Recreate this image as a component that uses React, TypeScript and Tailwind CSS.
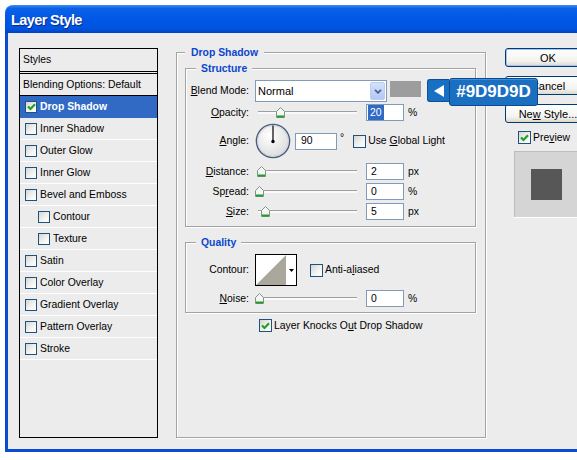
import React from 'react';

// Layer Style dialog — Photoshop look on an XP window frame

const ui = "font-['Liberation_Sans',Arial,sans-serif] text-[10.4px] leading-[14px] text-black";

function CheckBox({ checked = false, small = false }: { checked?: boolean; small?: boolean }) {
  return (
    <span
      className={`flex shrink-0 items-center justify-center border border-[#1c5180] bg-[linear-gradient(135deg,#d6d6d0,#f4f4f1_60%,#ffffff)] ${
        small ? 'h-[12px] w-[12px]' : 'h-[13px] w-[13px]'
      }`}
    >
      {checked && (
        <svg width="9" height="8" viewBox="0 0 9 8">
          <path d="M1 3.4 L3.5 6 L8 1.2" stroke="#21a121" strokeWidth="2.2" fill="none" />
        </svg>
      )}
    </span>
  );
}

const styleRows: { name: string; nested?: boolean }[] = [
  { name: 'Inner Shadow' },
  { name: 'Outer Glow' },
  { name: 'Inner Glow' },
  { name: 'Bevel and Emboss' },
  { name: 'Contour', nested: true },
  { name: 'Texture', nested: true },
  { name: 'Satin' },
  { name: 'Color Overlay' },
  { name: 'Gradient Overlay' },
  { name: 'Pattern Overlay' },
  { name: 'Stroke' },
];

function StylesPanel() {
  return (
    <div className="flex h-[390px] w-[139px] shrink-0 flex-col border border-black">
      <div className="flex h-[23px] items-center border-b border-black pl-[3px]">Styles</div>
      <div className="mt-[1px] flex h-[23px] items-center border-y border-black pl-[3px]">
        Blending Options: Default
      </div>
      <div className="flex h-[22px] items-center gap-[3px] bg-[#316ac5] pl-[5px] font-bold text-white">
        <CheckBox checked small />
        Drop Shadow
      </div>
      {styleRows.map((r) => (
        <div
          key={r.name}
          className={`flex h-[22px] items-center gap-[3px] border-b border-white ${r.nested ? 'pl-[18px]' : 'pl-[5px]'}`}
        >
          <CheckBox small />
          {r.name}
        </div>
      ))}
    </div>
  );
}

function Label({ children }: { children: React.ReactNode }) {
  return <div className="w-[63px] shrink-0 text-right">{children}</div>;
}

function Slider({ thumb }: { thumb: string }) {
  return (
    <div className="relative ml-[9px] flex h-[17px] w-[99px] items-center">
      <div className="h-[3px] w-full border-t border-[#9f9f9f] bg-[#fafafa]" />
      <svg className={`absolute top-[3px] ${thumb}`} width="9" height="11" viewBox="0 0 9 11">
        <path d="M0.5 4.5 L4.5 0.5 L8.5 4.5 V10.5 H0.5 Z" fill="#f6f6f4" stroke="#7f9488" />
        <rect x="1" y="8.5" width="7" height="2" fill="#1f9e2b" />
      </svg>
    </div>
  );
}

function Field({ children, className = 'w-[38px] pl-[4px]' }: { children: React.ReactNode; className?: string }) {
  return (
    <div className={`flex h-[17px] shrink-0 items-center border border-[#7f9db9] bg-white ${className}`}>{children}</div>
  );
}

function SliderRow({
  label,
  thumb,
  value,
  unit,
  className = '',
}: {
  label: React.ReactNode;
  thumb: string;
  value: React.ReactNode;
  unit: string;
  className?: string;
}) {
  return (
    <div className={`flex h-[17px] items-center ${className}`}>
      <Label>{label}</Label>
      <Slider thumb={thumb} />
      <div className="ml-[9px]">{value}</div>
      <span className="ml-[4px]">{unit}</span>
    </div>
  );
}

function Group({ title, className, children }: { title: string; className: string; children: React.ReactNode }) {
  return (
    <div
      className={`relative border border-[#a3a3a3] shadow-[inset_1px_1px_0_#ffffff,1px_1px_0_#ffffff] ${className}`}
    >
      <span className="absolute left-[10px] top-[-7px] h-[14px] bg-[#ececec] px-[5px] font-bold text-[#0b46cf]">
        {title}
      </span>
      {children}
    </div>
  );
}

function Button({ children, primary = false, className = '' }: { children: React.ReactNode; primary?: boolean; className?: string }) {
  return (
    <div
      className={`flex h-[19px] w-[86px] shrink-0 items-center justify-center rounded-[3px] border border-[#003c74] bg-[linear-gradient(180deg,#ffffff,#f3f3ef_70%,#dcd8cd)] text-[11px] ${
        primary ? 'shadow-[inset_0_0_0_1px_#a9c3ee]' : ''
      } ${className}`}
    >
      {children}
    </div>
  );
}

export default function App() {
  return (
    <div className={`h-[460px] w-[577px] overflow-hidden bg-white pl-[5px] pt-[5px] ${ui}`}>
      <div className="flex w-[640px] flex-col">
        {/* title bar */}
        <div className="flex h-[28px] items-start rounded-tl-[8px] bg-[linear-gradient(180deg,#3b8ef6_0%,#0b62e6_12%,#0058e6_45%,#0053de_85%,#0040c2_100%)] pl-[6px] pt-[7px]">
          <span className="text-[14.5px] font-bold leading-[16px] tracking-[-0.6px] text-white [text-shadow:1px_1px_0_#0a2a8a]">
            Layer Style
          </span>
        </div>

        {/* body */}
        <div className="relative flex h-[419px] items-start border-b-[3px] border-l-[3px] border-[#0a4bd3] bg-[#ececec] pl-[11px] pt-[15px]">
          <StylesPanel />

          {/* Drop Shadow group */}
          <div className="ml-[18px] mt-[4px] shrink-0">
            <div className="relative h-[386px] w-[310px] border border-[#a3a3a3] pl-[8px] pt-[15px] shadow-[inset_1px_1px_0_#ffffff,1px_1px_0_#ffffff]">
              <span className="absolute left-[8px] top-[-7px] h-[14px] bg-[#ececec] px-[6px] font-bold text-[#0b46cf]">
                Drop Shadow
              </span>

              <Group title="Structure" className="w-[291px] pb-[6px] pt-[11px]">
                <div className="flex h-[22px] items-center">
                  <Label>
                    <span className="underline">B</span>lend Mode:
                  </Label>
                  <div className="ml-[6px] flex h-[22px] w-[132px] items-center border border-[#7f9db9] bg-white pl-[2px]">
                    <span className="flex-1 text-[11px]">Normal</span>
                    <span className="mr-[1px] flex h-[18px] w-[15px] items-center justify-center rounded-[2px] border border-[#bccdf3] bg-[linear-gradient(180deg,#d4e0fd,#b4c8f4)]">
                      <svg width="8" height="5" viewBox="0 0 8 5">
                        <path d="M1 0.8 L4 3.8 L7 0.8" stroke="#4d6185" strokeWidth="1.8" fill="none" />
                      </svg>
                    </span>
                  </div>
                  <div className="ml-[3px] mt-[1px] h-[16px] w-[31px] self-start bg-[#9d9d9d]" />
                </div>

                <SliderRow
                  className="mt-[2px]"
                  label={
                    <>
                      <span className="underline">O</span>pacity:
                    </>
                  }
                  thumb="left-[18px]"
                  value={
                    <Field className="w-[38px] pl-[1px]">
                      <span className="flex h-[15px] items-center bg-[#316ac5] px-[2px] text-white">20</span>
                    </Field>
                  }
                  unit="%"
                />

                <div className="mt-[2px] flex h-[36px] items-center">
                  <Label>
                    <span className="underline">A</span>ngle:
                  </Label>
                  <svg className="ml-[6px] shrink-0" width="36" height="36" viewBox="0 0 36 36">
                    <defs>
                      <radialGradient id="dial" cx="40%" cy="35%" r="70%">
                        <stop offset="0" stopColor="#ffffff" />
                        <stop offset="1" stopColor="#dadada" />
                      </radialGradient>
                    </defs>
                    <circle cx="18" cy="18" r="16.6" fill="url(#dial)" stroke="#4b5c7f" strokeWidth="1.4" />
                    <circle cx="18" cy="18" r="15.4" fill="none" stroke="#c9ced8" strokeWidth="0.8" />
                    <line x1="18" y1="18.5" x2="18" y2="2.5" stroke="#000" strokeWidth="1.2" />
                    <circle cx="18" cy="18.5" r="1.7" fill="#000" />
                  </svg>
                  <Field className="ml-[4px] w-[42px] pl-[5px]">90</Field>
                  <span className="ml-[3px] self-start pt-[8px]">°</span>
                  <span className="ml-[9px]">
                    <CheckBox />
                  </span>
                  <span className="ml-[2px]">
                    Use <span className="underline">G</span>lobal Light
                  </span>
                </div>

                <SliderRow
                  className="mt-[4px]"
                  label={
                    <>
                      <span className="underline">D</span>istance:
                    </>
                  }
                  thumb="left-[-1px]"
                  value={<Field>2</Field>}
                  unit="px"
                />
                <SliderRow
                  className="mt-[3px]"
                  label={
                    <>
                      Sp<span className="underline">r</span>ead:
                    </>
                  }
                  thumb="left-[-3px]"
                  value={<Field>0</Field>}
                  unit="%"
                />
                <SliderRow
                  className="mt-[3px]"
                  label={
                    <>
                      <span className="underline">S</span>ize:
                    </>
                  }
                  thumb="left-[3px]"
                  value={<Field>5</Field>}
                  unit="px"
                />
              </Group>

              <Group title="Quality" className="mt-[15px] w-[291px] pb-[5px] pt-[11px]">
                <div className="flex h-[32px] items-center">
                  <Label>Contour:</Label>
                  <div className="ml-[6px] flex h-[32px] w-[42px] shrink-0 border border-black bg-white">
                    <svg width="30" height="30" viewBox="0 0 30 30">
                      <polygon points="0,30 30,0 30,30" fill="#aaa89c" />
                    </svg>
                    <div className="flex flex-1 items-center justify-center">
                      <svg width="5" height="3" viewBox="0 0 5 3">
                        <polygon points="0,0 5,0 2.5,3" fill="#000" />
                      </svg>
                    </div>
                  </div>
                  <span className="ml-[13px]">
                    <CheckBox />
                  </span>
                  <span className="ml-[2px]">
                    Anti-a<span className="underline">l</span>iased
                  </span>
                </div>
                <SliderRow
                  className="mt-[4px]"
                  label={
                    <>
                      <span className="underline">N</span>oise:
                    </>
                  }
                  thumb="left-[-3px]"
                  value={<Field>0</Field>}
                  unit="%"
                />
              </Group>

              <div className="ml-[74px] mt-[6px] flex h-[13px] items-center gap-[2px]">
                <CheckBox checked />
                <span>
                  Layer Knocks O<span className="underline">u</span>t Drop Shadow
                </span>
              </div>
            </div>
          </div>

          {/* buttons and preview */}
          <div className="ml-[19px] flex w-[86px] shrink-0 flex-col">
            <Button primary>OK</Button>
            <Button className="mt-[9px]">Cancel</Button>
            <Button className="mt-[9px]">
              <span>
                Ne<span className="underline">w</span> Style...
              </span>
            </Button>
            <div className="ml-[13px] mt-[8px] flex h-[13px] items-center gap-[2px]">
              <CheckBox checked />
              <span>
                Pre<span className="underline">v</span>iew
              </span>
            </div>
            <div className="ml-[9px] mt-[7px] h-[66px] w-[80px] shrink-0 border-l border-t border-[#bdbdbd] bg-[#d5d5d5] pl-[16px] pt-[17px] shadow-[0_1px_0_#ffffff]">
              <div className="h-[31px] w-[31px] bg-[#575757]" />
            </div>
          </div>

          {/* colour callout */}
          <div className="absolute left-[419px] top-[45px] flex items-start">
            <div className="mt-[1px] flex h-[23px] w-[22px] items-center justify-center rounded-l-[3px] border border-r-0 border-[#0e4f96] bg-[#1870c4]">
              <svg width="10" height="12" viewBox="0 0 10 12">
                <polygon points="0,6 10,0 10,12" fill="#ffffff" />
              </svg>
            </div>
            <div className="flex h-[28px] w-[89px] items-center justify-center rounded-[3px] border border-[#0c4a8f] bg-[#1a6fc1] text-[17px] font-bold leading-[20px] text-white shadow-[inset_0_1px_0_#3f8fd8]">
              #9D9D9D
            </div>
          </div>
        </div>
      </div>
    </div>
  );
}
